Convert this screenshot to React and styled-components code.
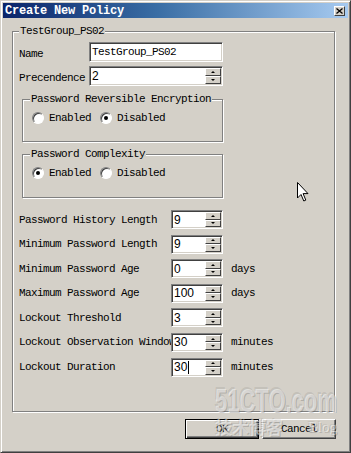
import React from 'react';
import styled, { createGlobalStyle } from 'styled-components';

const Global = createGlobalStyle`
  html, body {
    margin: 0;
    padding: 0;
    background: #d4d0c8;
  }
`;

const mono = `"Liberation Mono", "DejaVu Sans Mono", monospace`;

const Window = styled.div`
  position: relative;
  box-sizing: border-box;
  width: 351px;
  height: 453px;
  padding: 2px;
  background: #d4d0c8;
  border: 1px solid;
  border-color: #d4d0c8 #404040 #404040 #d4d0c8;
  box-shadow: inset 1px 1px #fff, inset -1px -1px #808080;
  display: flex;
  flex-direction: column;
  font-family: ${mono};
  font-size: 11px;
  letter-spacing: -0.6px;
  color: #000;
  overflow: hidden;
`;

const TitleBar = styled.div`
  height: 15px;
  display: flex;
  align-items: center;
  justify-content: space-between;
  padding-left: 2px;
  background: linear-gradient(to right, #0a246a 0%, #3a6ea5 45%, #a6caf0 100%);
`;

const TitleText = styled.span`
  color: #fff;
  font-weight: bold;
  font-size: 12px;
  letter-spacing: -0.2px;
`;

const CloseButton = styled.div`
  width: 11px;
  height: 10px;
  margin-right: 3px;
  box-sizing: border-box;
  background: #d4d0c8;
  border: 1px solid;
  border-color: #fff #404040 #404040 #fff;
  display: flex;
  align-items: center;
  justify-content: center;
`;

const Body = styled.div`
  flex: 1;
  display: flex;
  flex-direction: column;
  padding: 7px 13px 0 9px;
`;

const Group = styled.fieldset`
  box-sizing: border-box;
  margin: 0;
  min-width: 0;
  height: ${p => p.$h}px;
  width: ${p => (p.$w ? `${p.$w}px` : 'auto')};
  margin-left: ${p => p.$ml || 0}px;
  margin-top: ${p => p.$mt || 0}px;
  padding: 0 ${p => p.$pl}px;
  border: 1px solid #808080;
  box-shadow: inset 1px 1px #fff, 1px 1px #fff;
`;

const Legend = styled.legend`
  padding: 0 1px;
  line-height: 12px;
  background: #d4d0c8;
`;

const FieldRow = styled.div`
  display: grid;
  grid-template-columns: 70px 134px;
  align-items: center;
  height: 20px;
  margin-top: ${p => p.$mt}px;
`;

const Label = styled.span`
  white-space: nowrap;
  padding-top: ${p => p.$pt || 0}px;
`;

const Sunken = styled.div`
  position: relative;
  box-sizing: border-box;
  height: ${p => p.$h}px;
  background: #fff;
  border: 1px solid;
  border-color: #808080 #fff #fff #808080;
  box-shadow: inset 1px 1px #404040, inset -1px -1px #d4d0c8;
  display: flex;
  align-items: stretch;
`;

const Value = styled.span`
  flex: 1;
  display: flex;
  align-items: center;
  padding-left: 2px;
  font-family: ${p => (p.$sans ? `"Liberation Sans", Arial, sans-serif` : mono)};
  font-size: ${p => (p.$sans ? '12px' : '11px')};
  letter-spacing: ${p => (p.$sans ? '0' : '-0.6px')};
`;

const Caret = styled.span`
  display: inline-block;
  width: 1px;
  height: 13px;
  margin-left: 1px;
  background: #000;
`;

const Spin = styled.div`
  width: 16px;
  margin: 1px 1px 1px 0;
  display: flex;
  flex-direction: column;
`;

const SpinButton = styled.div`
  flex: 1;
  box-sizing: border-box;
  background: #d4d0c8;
  border: 1px solid;
  border-color: #fff #404040 #404040 #fff;
  display: flex;
  align-items: center;
  justify-content: center;
`;

const Arrow = styled.span`
  width: 0;
  height: 0;
  border-left: 2px solid transparent;
  border-right: 2px solid transparent;
  ${p => (p.$up ? 'border-bottom: 2px solid #000;' : 'border-top: 2px solid #000;')}
`;

const RadioRow = styled.div`
  display: flex;
  align-items: center;
  gap: 9px;
  margin-top: 7px;
  padding-left: 2px;
`;

const RadioOption = styled.label`
  display: flex;
  align-items: center;
  gap: 5px;
`;

const RadioDot = styled.span`
  box-sizing: border-box;
  width: 12px;
  height: 12px;
  border-radius: 50%;
  background: #fff;
  border: 1px solid;
  border-color: #808080 #fff #fff #808080;
  box-shadow: inset 1px 1px #404040;
  display: flex;
  align-items: center;
  justify-content: center;
  &::after {
    content: '';
    width: 4px;
    height: 4px;
    border-radius: 50%;
    background: ${p => (p.$on ? '#000' : 'transparent')};
  }
`;

const SpinGrid = styled.div`
  display: grid;
  grid-template-columns: 152px 52px auto;
  grid-auto-rows: 19px;
  row-gap: 5.6px;
  align-items: center;
  margin-top: 12px;
`;

const Suffix = styled.span`
  padding-left: 8px;
  white-space: nowrap;
`;

const ButtonBar = styled.div`
  display: flex;
  justify-content: flex-end;
  gap: 3px;
  margin-top: 7px;
  margin-right: -1px;
`;

const Button = styled.button`
  box-sizing: border-box;
  width: 74px;
  height: 20px;
  padding: 0;
  font-family: ${mono};
  font-size: 11px;
  letter-spacing: -0.6px;
  color: #000;
  background: #d4d0c8;
  border: 1px solid;
  border-color: ${p => (p.$default ? '#000' : '#fff #404040 #404040 #fff')};
  box-shadow: ${p =>
    p.$default
      ? 'inset 1px 1px #fff, inset -1px -1px #404040, inset -2px -2px #808080'
      : 'inset -1px -1px #808080'};
`;

const Cursor = styled.svg`
  position: absolute;
  left: 296px;
  top: 181px;
`;

const Watermark = styled.div`
  position: absolute;
  left: 214px;
  top: 384px;
  width: 122px;
  pointer-events: none;
  font-family: "Liberation Sans", Arial, sans-serif;
  font-weight: bold;
  color: rgba(255, 255, 255, 0.5);
  text-shadow: 1px 1px rgba(90, 90, 90, 0.3), -1px -1px rgba(90, 90, 90, 0.15);
  letter-spacing: 0;
`;

const WatermarkBig = styled.div`
  font-size: 22px;
  line-height: 32px;
  white-space: nowrap;
  transform: scaleY(1.55);
  transform-origin: center center;
`;

const WatermarkSmall = styled.div`
  display: flex;
  justify-content: space-between;
  font-size: 17px;
  line-height: 20px;
  font-family: "Noto Sans CJK SC", "Liberation Sans", sans-serif;
  span:last-child {
    font-family: "Liberation Serif", serif;
    font-weight: normal;
    font-size: 15px;
  }
`;

const SpinBox = ({ value, caret }) => (
  <Sunken $h={19}>
    <Value $sans>
      {value}
      {caret && <Caret />}
    </Value>
    <Spin>
      <SpinButton><Arrow $up /></SpinButton>
      <SpinButton><Arrow /></SpinButton>
    </Spin>
  </Sunken>
);

const Radio = ({ on, children }) => (
  <RadioOption>
    <RadioDot $on={on} />
    {children}
  </RadioOption>
);

const rows = [
  ['Password History Length', '9'],
  ['Minimum Password Length', '9'],
  ['Minimum Password Age', '0', 'days'],
  ['Maximum Password Age', '100', 'days'],
  ['Lockout Threshold', '3'],
  ['Lockout Observation Window', '30', 'minutes'],
  ['Lockout Duration', '30', 'minutes', true],
];

export default function App() {
  return (
    <Window>
      <Global />
      <TitleBar>
        <TitleText>Create New Policy</TitleText>
        <CloseButton>
          <svg width="7" height="6" viewBox="0 0 7 6">
            <path d="M0.5 0.5 L6.5 5.5 M6.5 0.5 L0.5 5.5" stroke="#000" strokeWidth="1.3" />
          </svg>
        </CloseButton>
      </TitleBar>
      <Body>
        <Group $h={387} $pl={6}>
          <Legend>TestGroup_PS02</Legend>
          <FieldRow $mt={5}>
            <Label $pt={4}>Name</Label>
            <Sunken $h={20}>
              <Value>TestGroup_PS02</Value>
            </Sunken>
          </FieldRow>
          <FieldRow $mt={4}>
            <Label $pt={3}>Precendence</Label>
            <Sunken $h={20}>
              <Value $sans>2</Value>
              <Spin>
                <SpinButton><Arrow $up /></SpinButton>
                <SpinButton><Arrow /></SpinButton>
              </Spin>
            </Sunken>
          </FieldRow>
          <Group $h={49} $w={201} $ml={3} $mt={7} $pl={7}>
            <Legend>Password Reversible Encryption</Legend>
            <RadioRow>
              <Radio>Enabled</Radio>
              <Radio on>Disabled</Radio>
            </RadioRow>
          </Group>
          <Group $h={50} $w={201} $ml={3} $mt={6} $pl={7}>
            <Legend>Password Complexity</Legend>
            <RadioRow>
              <Radio on>Enabled</Radio>
              <Radio>Disabled</Radio>
            </RadioRow>
          </Group>
          <SpinGrid>
            {rows.map(([label, value, suffix, caret]) => (
              <React.Fragment key={label}>
                <Label>{label}</Label>
                <SpinBox value={value} caret={caret} />
                <Suffix>{suffix}</Suffix>
              </React.Fragment>
            ))}
          </SpinGrid>
        </Group>
        <ButtonBar>
          <Button $default>OK</Button>
          <Button>Cancel</Button>
        </ButtonBar>
      </Body>
      <Watermark>
        <WatermarkBig>51CTO.com</WatermarkBig>
        <WatermarkSmall>
          <span>技术博客</span>
          <span>Blog</span>
        </WatermarkSmall>
      </Watermark>
      <Cursor width="12" height="20" viewBox="0 0 12 20">
        <path d="M0.5 0.5 L0.5 16 L4 12.5 L6.8 19 L8.8 18.1 L6.1 11.6 L11 11.6 Z" fill="#fff" stroke="#000" strokeWidth="1" />
      </Cursor>
    </Window>
  );
}
